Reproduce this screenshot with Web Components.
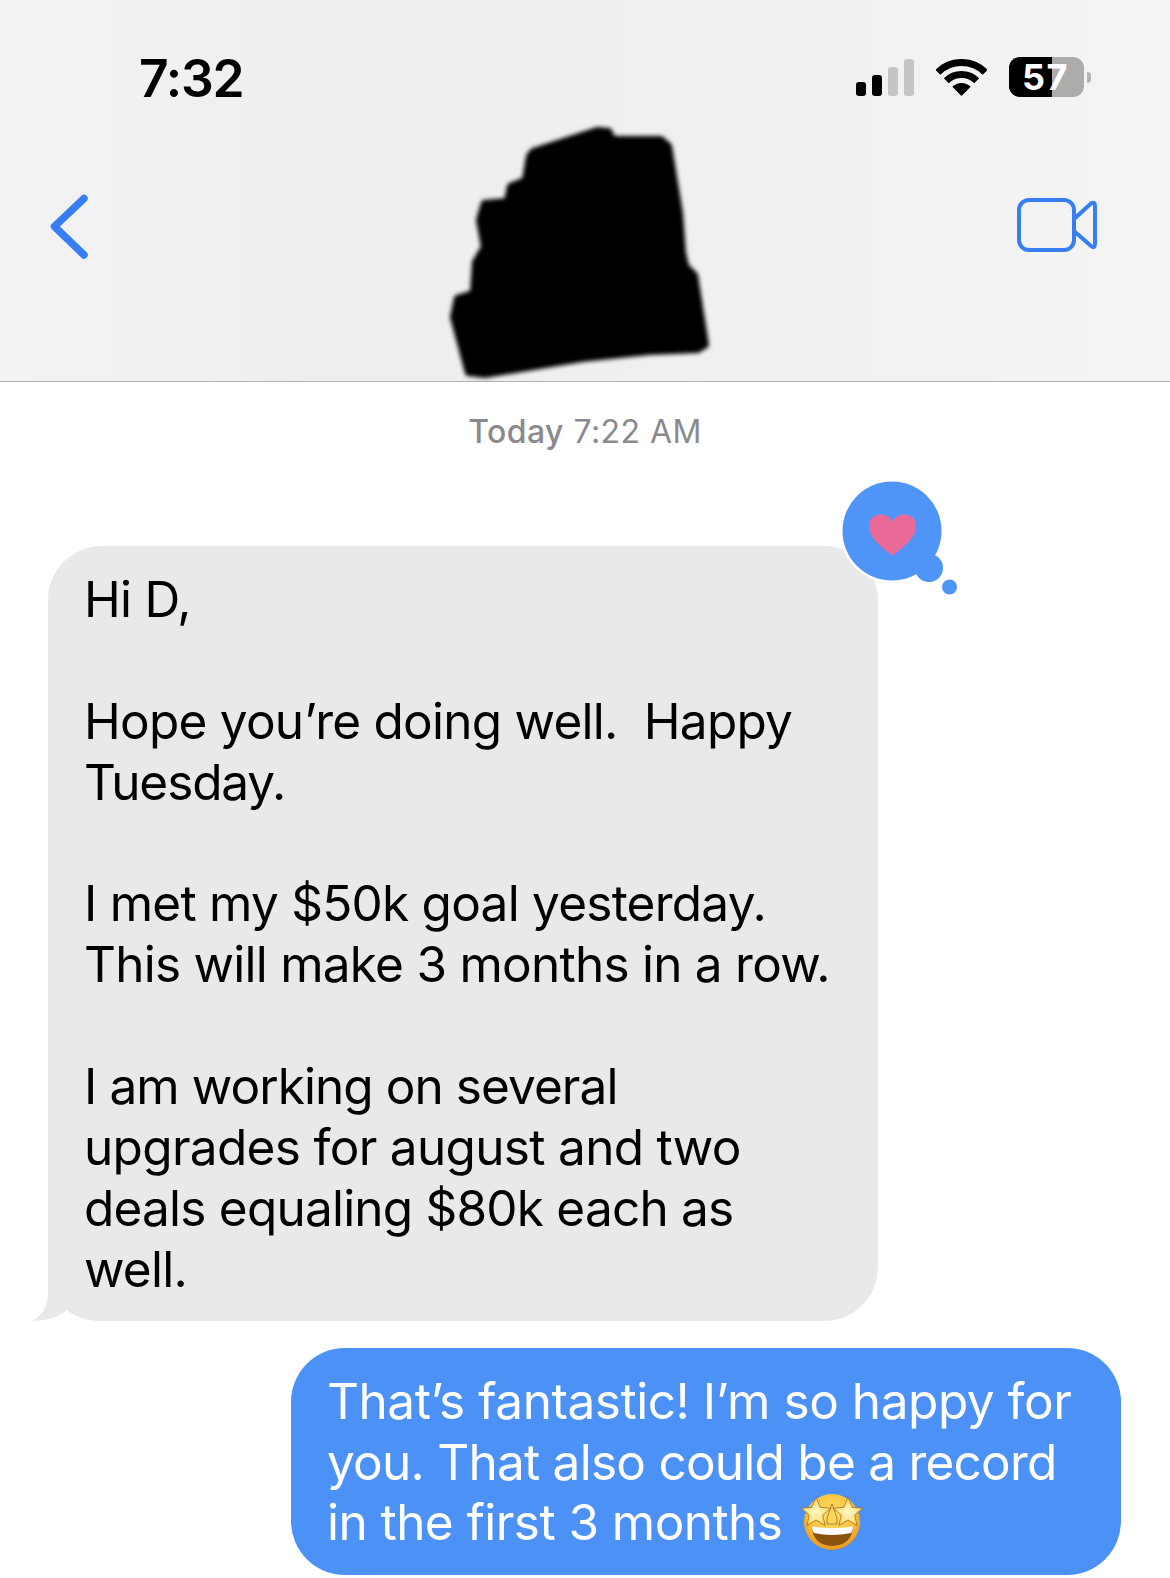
<!DOCTYPE html>
<html lang="en">
<head>
<meta charset="utf-8">
<title>Messages</title>
<style>
html,body{margin:0;padding:0;background:#fff}
body{width:1170px;height:1578px;overflow:hidden;font-family:Inter,"Liberation Sans",sans-serif}
</style>
</head>
<body>
<ios-screen>
  <ios-header slot="header"></ios-header>
  <chat-timestamp><b>Today</b> 7:22 AM</chat-timestamp>
  <chat-bubble kind="in" tapback>Hi D,<br><br>Hope you’re doing well.&nbsp; Happy<br><span style="letter-spacing:-1.1px">Tuesday.</span><br><br>I met my $50k goal yesterday.<br>This will make 3 months in a row.<br><br><span style="letter-spacing:-.92px">I am working on several</span><br><span style="letter-spacing:-.68px">upgrades for august and two</span><br><span style="letter-spacing:-.78px">deals equaling $80k each as</span><br>well.</chat-bubble>
  <chat-bubble kind="out"><span style="letter-spacing:-.45px">That’s fantastic! I’m so happy for</span><br>you. That also could be a record<br><span style="letter-spacing:-.55px">in the first 3 months</span> <star-emoji></star-emoji></chat-bubble>
</ios-screen>
<script>
class IosScreen extends HTMLElement{
  constructor(){super();this.attachShadow({mode:'open'}).innerHTML=`<style>
  :host{display:flex;flex-direction:column;width:1170px}
  .list{display:flex;flex-direction:column}
  </style><slot name="header"></slot><div class="list"><slot></slot></div>`}
}
class IosHeader extends HTMLElement{
  constructor(){super();this.attachShadow({mode:'open'}).innerHTML=`<style>
  :host{display:block;position:relative;height:381px;background:linear-gradient(90deg,#f3f3f4,#eeeef0 30%,#f0f0f1 60%,#f4f4f5);border-bottom:1.5px solid #b3b3b3;box-sizing:content-box}
  .status{display:flex;align-items:flex-start;height:130px;box-sizing:border-box}
  .time{font:600 51.5px/61px Inter,"Liberation Sans",sans-serif;color:#000;margin:48px 0 0 139px;letter-spacing:-1.2px}
  .icons{margin-left:auto;display:flex;align-items:flex-start;margin-right:79px;margin-top:57px}
  .signal{display:flex;align-items:flex-end;gap:6px;height:37px;margin-top:2px}
  .signal i{display:block;width:10px;border-radius:3px;background:#000}
  .signal i.off{background:#c5c5c7}
  .wifi{display:block;margin:2px 0 0 22px}
  .battery{position:relative;width:75px;height:40px;margin-left:22px;border-radius:11px;background:#acacac;font:700 36px/40px Inter,"Liberation Sans",sans-serif;color:#fff;text-align:center;letter-spacing:1.5px}
  .battery::before{content:"";position:absolute;left:0;top:0;bottom:0;width:43px;background:#000;border-radius:11px 0 0 11px}
  .battery span{position:relative;left:-1px}
  .tip{width:4px;height:11px;margin:15px 0 0 3px;background:#b4b4b4;border-radius:0 6px 6px 0}
  .nav{display:flex;justify-content:space-between;align-items:flex-start;padding:64px 73px 0 49px}
  .video{margin-top:4px}
  .redact{position:absolute;left:435px;top:112px}
  </style>
  <div class="status">
    <div class="time">7:32</div>
    <div class="icons">
      <div class="signal"><i style="height:14px"></i><i style="height:21px"></i><i class="off" style="height:29px"></i><i class="off" style="height:37px"></i></div>
      <svg class="wifi" width="51" height="37" viewBox="0 0 51 37" fill="none" stroke="#000" stroke-width="7">
        <path d="M1.8 13.3A33.5 33.5 0 0 1 49.2 13.3"/>
        <path d="M10.3 21.8A21.5 21.5 0 0 1 40.7 21.8"/>
        <path d="M25.5 37L16.3 27.8A13 13 0 0 1 34.7 27.8Z" fill="#000" stroke="none"/>
      </svg>
      <div class="battery"><span>57</span></div>
      <div class="tip"></div>
    </div>
  </div>
  <div class="nav">
    <svg width="40" height="66" viewBox="0 0 40 66" fill="none" stroke="#377ef5" stroke-width="7.5" stroke-linecap="round" stroke-linejoin="round"><path d="M35 4.5L5.5 32.5L35 61"/></svg>
    <svg class="video" width="80" height="54" viewBox="0 0 80 54" fill="none" stroke="#377ef5" stroke-width="4" stroke-linejoin="round"><rect x="2" y="2" width="55" height="50" rx="10"/><path d="M57 21L74 5.5Q78 3 78 8V46Q78 51 74 48L57 33"/></svg>
  </div>
  <svg class="redact" width="290" height="282" viewBox="435 112 290 282"><defs><filter id="b" x="-5%" y="-5%" width="110%" height="110%"><feGaussianBlur stdDeviation="2.2"/></filter></defs>
    <polygon filter="url(#b)" fill="#000" stroke="#000" stroke-width="6" stroke-linejoin="round" points="533,151 597,130 609,131 613,139 661,139 669,146 680,213 683,253 686,266 695,275 706,345 698,350 649,352 582,359 485,375 468,373 453,317 457,298 473,293 475,262 484,247 479,220 484,203 507,201 510,186 525,180 529,156"/>
  </svg>`}
}
class ChatTimestamp extends HTMLElement{
  constructor(){super();this.attachShadow({mode:'open'}).innerHTML=`<style>
  :host{display:block;text-align:center;font:400 32px/40px Inter,"Liberation Sans",sans-serif;letter-spacing:.45px;color:#8a8a8e;margin:30px 0 0;height:134px}
  ::slotted(b){font-weight:500}
  </style><slot></slot>`}
}
class ChatBubble extends HTMLElement{
  constructor(){super();
    const kind=this.getAttribute('kind');
    const tail=kind==='in'?`<svg class="tail" width="90" height="60" viewBox="0 0 90 60"><path d="M16 0V32.5C16 45 10 55 0 60C14 60 26 56 35 49C42 55 54 60 68 60H90V30H36V0Z" fill="#e9e9eb"/></svg>`:'';
    const tap=this.hasAttribute('tapback')?`<svg class="tap" width="124" height="124" viewBox="838 478 124 124">
      <circle cx="892" cy="531" r="52" fill="#fff"/><circle cx="929" cy="568" r="17" fill="#fff"/>
      <circle cx="892" cy="531" r="49.5" fill="#4f94f7"/><circle cx="929" cy="568" r="14" fill="#4f94f7"/><circle cx="949.5" cy="587" r="7.5" fill="#4f94f7"/>
      <path d="M892.5 555.5C884 549 869 539 869 526C869 518 875 514.5 880.5 514.5C886 514.5 890 517 892.5 521.5C895 517 899 514.5 904.5 514.5C910 514.5 916 518 916 526C916 539 901 549 892.5 555.5Z" fill="#e96a98"/>
    </svg>`:'';
    this.attachShadow({mode:'open'}).innerHTML=`<style>
    :host{display:block;position:relative;box-sizing:border-box;width:830px;padding:22.8px 36px 21.2px;border-radius:54px;font:400 49.5px/60.9px Inter,"Liberation Sans",sans-serif;letter-spacing:-.75px;white-space:nowrap}
    :host([kind=in]){margin-left:48px;background:#e9e9eb;color:#000}
    :host([kind=out]){margin:27px 0 0 291px;background:#4c91f6;color:#fff}
    .tail{position:absolute;left:-16px;bottom:0}
    .tap{position:absolute;left:790px;top:-68px}
    </style>${tail}<slot></slot>${tap}`}
}
class StarEmoji extends HTMLElement{
  constructor(){super();
    const star=(cx,cy,R,r)=>{let p=[];for(let i=0;i<10;i++){const a=-Math.PI/2+i*Math.PI/5,q=i%2?r:R;p.push((cx+q*Math.cos(a)).toFixed(1)+','+(cy+q*Math.sin(a)).toFixed(1))}return p.join(' ')};
    this.attachShadow({mode:'open'}).innerHTML=`<style>
    :host{display:inline-block;width:62px;height:62px;vertical-align:-11.5px;margin:-24px 0 0 5px}
    svg{display:block}
    </style><svg width="62" height="62" viewBox="0 0 62 62">
    <defs><radialGradient id="f" cx=".5" cy=".38" r=".62"><stop offset="0" stop-color="#fde46c"/><stop offset=".65" stop-color="#f9c33c"/><stop offset="1" stop-color="#e8941c"/></radialGradient>
    <radialGradient id="s" cx=".5" cy=".5" r=".6"><stop offset="0" stop-color="#fff6c8"/><stop offset="1" stop-color="#fbd75a"/></radialGradient></defs>
    <circle cx="31" cy="32" r="28" fill="url(#f)"/>
    <path d="M11 37Q31 41 52 37Q51 55 31 56Q12 55 11 37Z" fill="#8a5312"/>
    <path d="M11 36.5Q31 40 52 36.5Q52 41 50 43Q31 47 13 43Q11 41 11 36.5Z" fill="#fff"/>
    <path d="M31 14L36 28V34H26V28Z" fill="#fbd65a" stroke="#a8651a" stroke-width=".8"/>
    <polygon points="${star(15,23,15.5,7)}" fill="url(#s)" stroke="#a8651a" stroke-width=".8" stroke-linejoin="round"/>
    <polygon points="${star(47,23,15.5,7)}" fill="url(#s)" stroke="#a8651a" stroke-width=".8" stroke-linejoin="round"/>
    </svg>`}
}
customElements.define('ios-screen',IosScreen);
customElements.define('ios-header',IosHeader);
customElements.define('chat-timestamp',ChatTimestamp);
customElements.define('chat-bubble',ChatBubble);
customElements.define('star-emoji',StarEmoji);
</script>
</body>
</html>
